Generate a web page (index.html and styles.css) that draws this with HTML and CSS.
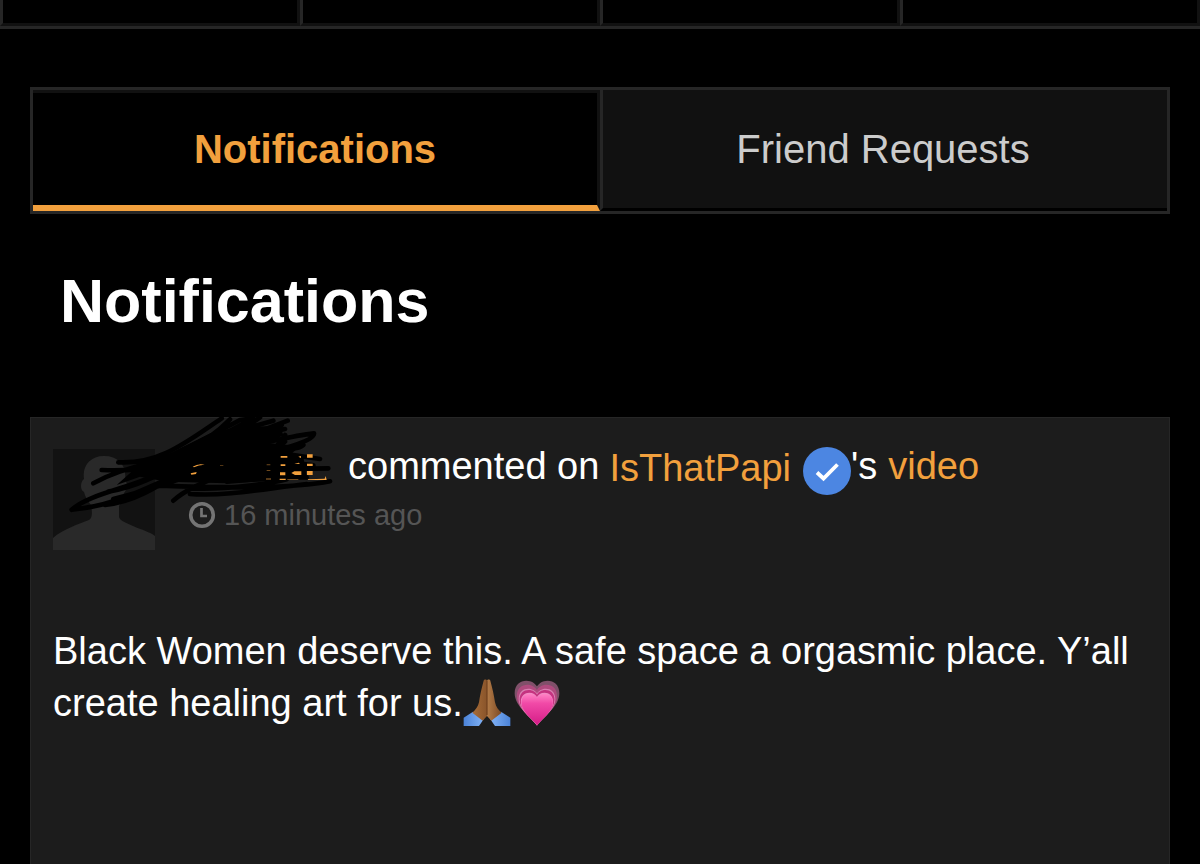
FILE: index.html
```html
<!DOCTYPE html>
<html lang="en">
<head>
<meta charset="utf-8">
<meta name="viewport" content="width=device-width, initial-scale=1">
<title>Notifications</title>
<link rel="stylesheet" href="styles.css">
</head>
<body>
<div class="strip"><div class="strip-cell"></div><div class="strip-cell"></div><div class="strip-cell"></div><div class="strip-cell"></div></div>
<main class="page">
  <div class="tabs" role="tablist">
    <button class="tab tab-active" type="button" role="tab" aria-selected="true">Notifications</button>
    <button class="tab" type="button" role="tab" aria-selected="false">Friend Requests</button>
  </div>
  <h1 class="title">Notifications</h1>
  <article class="card">
    <header class="head">
      <svg class="avatar" viewBox="0 0 102 101" aria-hidden="true">
        <rect width="102" height="101" fill="#121212"/>
        <path d="M0 101V89C10 80 26 75 36 71C40 69 39 62 38 56C34 51 32 47 31 43C27 41 27 33 31 30C29 17 37 7 51 7C66 7 74 17 72 31C75 34 74 41 71 44C70 49 69 53 66 57V68C67 72 72 73 80 77C89 81 97 83 102 87V101Z" fill="#292929"/>
      </svg>
      <div class="info">
        <p class="line">
          <span>commented on</span>
          <a class="link user" href="#">IsThatPapi</a>
          <svg class="badge" viewBox="0 0 48 48" role="img" aria-label="Verified"><circle cx="24" cy="24" r="24" fill="#4c86e2"/><path d="M14 25.500L20.500 31.500L34.500 17.500" fill="none" stroke="#fff" stroke-width="3.800"/></svg>
          <span>'s</span>
          <a class="link video" href="#">video</a>
        </p>
        <p class="time">
          <svg class="clock" viewBox="0 0 28 28" aria-hidden="true"><g fill="none" stroke="#747474"><circle cx="14" cy="14" r="11.300" stroke-width="3.600"/><path d="M13.500 7V15H19" stroke-width="2.700"/></g></svg>
          <span>16 minutes ago</span>
        </p>
      </div>
    </header>
    <p class="message">Black Women deserve this. A safe space a orgasmic place. Y’all create healing art for us.<svg class="emoji hands" viewBox="0 0 144 144" role="img" aria-label="Folded hands">
        <defs>
          <linearGradient id="skin" x1="0" x2="1"><stop offset="0" stop-color="#a86d38"/><stop offset=".48" stop-color="#8a552b"/><stop offset=".52" stop-color="#b17a47"/><stop offset="1" stop-color="#7b4923"/></linearGradient>
          <linearGradient id="sleeve" x1="0" x2="1"><stop offset="0" stop-color="#4b83d8"/><stop offset=".35" stop-color="#78aaf0"/><stop offset=".65" stop-color="#78aaf0"/><stop offset="1" stop-color="#4b83d8"/></linearGradient>
        </defs>
        <path d="M2 141V116L30 98L62 121L48 141ZM142 141V116L114 98L82 121L96 141Z" fill="url(#sleeve)"/>
        <path d="M62 5C64 0 71 1 72 5C73 1 80 0 82 5C88 27 93 48 96 70C99 84 106 93 116 101L85 125L72 111L59 125L28 101C39 92 45 82 48 70C51 48 56 27 62 5Z" fill="url(#skin)"/>
        <path d="M72 5V108" stroke="#663919" stroke-width="3"/>
      </svg><svg class="emoji heart" viewBox="0 0 144 144" role="img" aria-label="Growing heart">
        <defs>
          <linearGradient id="heart" x1="0" y1="0" x2="0" y2="1"><stop offset="0" stop-color="#ff83c5"/><stop offset=".3" stop-color="#f14aa7"/><stop offset="1" stop-color="#d41b86"/></linearGradient>
          <path id="shape" d="M72 140C53 113 5 83 5 43C5 16 22 5 40 5C56 5 67 14 72 22C77 14 88 5 104 5C122 5 139 16 139 43C139 83 91 113 72 140Z"/>
        </defs>
        <use href="#shape" fill="#80506a"/>
        <use href="#shape" fill="#b04a7e" transform="translate(7 13) scale(.9)"/>
        <use href="#shape" fill="#d97fb0" transform="translate(13 25) scale(.82)"/>
        <use href="#shape" fill="#c53380" transform="translate(16 29) scale(.78)"/>
        <use href="#shape" fill="#f08cc4" transform="translate(20 38) scale(.72)"/>
        <use href="#shape" fill="url(#heart)" transform="translate(22 41) scale(.7)"/>
      </svg></p>
    <svg class="scribble" viewBox="0 0 930 450" aria-hidden="true">
      <path d="M290 172L360 145L440 105L520 66L600 50L720 48L730 75L690 100L780 108L750 135L790 140L800 200L700 212L560 220L380 215L300 200L230 225Z"/>
      <g fill="none" stroke="#000" stroke-linecap="round" stroke-linejoin="round" stroke-width="14">
        <path d="M235 157C360 163 440 95 545 25M185 180C310 185 370 167 450 140M160 220C300 142 430 170 570 28M95 299C270 285 350 198 530 160S700 125 735 75M95 299C150 250 270 235 360 190S580 80 660 22M195 285C340 270 430 160 590 90L743 32M205 245C380 215 440 112 610 85L735 57M400 272C470 205 650 175 735 95M360 227C570 235 770 235 870 214M450 252C560 260 680 235 800 222M455 235C560 240 700 219 740 208M470 125C610 125 720 80 822 70C825 95 700 125 630 143M520 108L725 45M580 128C680 95 760 132 790 105M690 125L840 147M705 151L820 166M690 178L865 175M690 201L800 202M560 215L790 196M220 267C370 230 420 200 520 180M430 120L600 30L640 25L500 100M600 60L700 32"/>
      </g>
      <g fill="#f2a03d">
        <path d="M458 170Q475 159 494 164Q475 165 462 172ZM452 190L470 186L468 192L454 194ZM722 138H742V143H722ZM722 163H736V168H722ZM720 187H736V196H720ZM719 206H737V210H719ZM801 133H818V143H801ZM801 161H818V168H801ZM801 183H818V195H801ZM754 189L763 184H784V195H765ZM804 208L854 206L857 198L860 210H804ZM763 161L776 158L780 162ZM775 140L783 138V144Z"/>
        <path opacity=".45" d="M678 205H693V209H678ZM680 180H691V183H680ZM680 163H691V166H680ZM540 166H550V168H540ZM742 207H775V210H742Z"/>
      </g>
    </svg>
  </article>
</main>
</body>
</html>
```
FILE: styles.css
```css
* {
  box-sizing: border-box;
}

body {
  margin: 0;
  min-height: 100vh;
  display: flex;
  flex-direction: column;
  background: #000;
  color: #fff;
  font-family: "Liberation Sans", Arial, sans-serif;
}

.strip {
  display: grid;
  grid-template-columns: repeat(4, 1fr);
  border-bottom: 3px solid #262626;
}

.strip-cell {
  height: 26px;
  border-left: 3px solid #262626;
  border-right: 3px solid #111;
  border-bottom: 3px solid #111;
}

.page {
  flex: 1;
  display: flex;
  flex-direction: column;
  padding: 58px 30px 0;
}

.tabs {
  display: grid;
  grid-template-columns: 1fr 1fr;
  border: 3px solid #262626;
}

.tab {
  height: 121px;
  padding: 0 4px 0 0;
  border: 0 solid #262626;
  border-left-width: 3px;
  border-bottom: 3px solid #000;
  background: #111;
  color: #ccc;
  font-family: inherit;
  font-size: 40px;
}

.tab-active {
  padding-right: 0;
  border-top: 3px solid #111;
  border-right: 3px solid #111;
  border-bottom: 6px solid #f2a03d;
  border-left-width: 0;
  background: #000;
  color: #f2a03d;
  font-weight: bold;
}

.title {
  margin: 52px 30px 81px;
  font-size: 61px;
  line-height: 70px;
}

.card {
  position: relative;
  flex: 1;
  padding: 31px 22px;
  border: 1px solid #262626;
  border-bottom: 0;
  background: #1c1c1c;
}

.head {
  display: flex;
  gap: 33px;
}

.avatar {
  width: 102px;
  height: 101px;
}

.info {
  flex: 1;
}

.line {
  display: flex;
  margin: 0;
  padding-left: 160px;
  font-size: 38px;
  line-height: 34px;
}

.link {
  color: #f2a03d;
  text-decoration: none;
}

.user {
  padding-top: 2px;
  margin: 0 12px 0 10px;
}

.badge {
  width: 48px;
  height: 48px;
  margin-top: -2px;
}

.video {
  margin-left: 11px;
}

.time {
  display: flex;
  align-items: center;
  gap: 8px;
  margin: 2px 0 0;
  color: #555;
  font-size: 29px;
  line-height: 36px;
}

.clock {
  width: 28px;
  height: 28px;
}

.message {
  margin: 75px 0 0;
  font-size: 38px;
  line-height: 52px;
}

.emoji {
  width: 48px;
  height: 48px;
  vertical-align: -11px;
}

.heart {
  margin-left: 2px;
}

.scribble {
  position: absolute;
  top: -8px;
  left: 9px;
  width: 310px;
  height: 150px;
  pointer-events: none;
}
```
